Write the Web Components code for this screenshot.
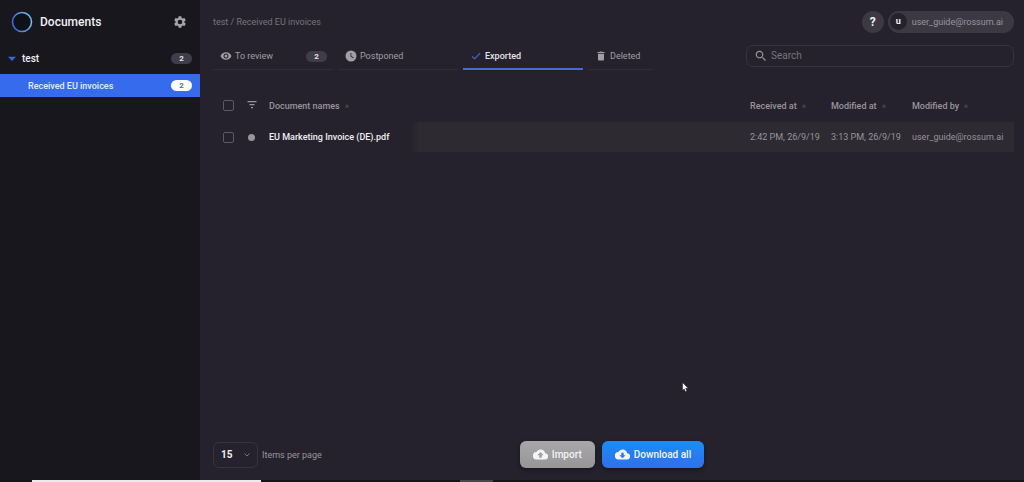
<!DOCTYPE html>
<html lang="en">
<head>
<meta charset="utf-8">
<meta name="viewport" content="width=device-width, initial-scale=1">
<title>Documents</title>
<style>
  body { margin: 0; background: #25222d; font: 9px/12px Roboto, "Liberation Sans", sans-serif; color: #98959c; }
</style>
</head>
<body>
<app-shell>
  <side-bar slot="side">
    <nav-queue label="test" count="2" kind="group"></nav-queue>
    <nav-queue label="Received EU invoices" count="2" kind="queue"></nav-queue>
  </side-bar>
  <top-bar user="user_guide@rossum.ai"></top-bar>
  <tool-row>
    <tab-link icon="eye" count="2">To review</tab-link>
    <tab-link icon="clock">Postponed</tab-link>
    <tab-link icon="check" active>Exported</tab-link>
    <tab-link icon="trash" compact>Deleted</tab-link>
    <search-box slot="end"></search-box>
  </tool-row>
  <document-table></document-table>
  <page-footer>
    <action-button icon="upload">Import</action-button>
    <action-button icon="download" primary>Download all</action-button>
  </page-footer>
</app-shell>
<mouse-pointer></mouse-pointer>
<task-strip></task-strip>

<script>
const define = (name, render) => customElements.define(name, class extends HTMLElement {
  connectedCallback() {
    if (this.shadowRoot) return;
    const t = document.createElement('template');
    t.innerHTML = `<style>*{box-sizing:border-box}:host{display:block}</style>` + render(this);
    this.attachShadow({ mode: 'open' }).append(t.content.cloneNode(true));
  }
});

const shapes = {
  gear: '<path fill-rule="evenodd" d="M19.4 13c.1-.3.1-.7.1-1s0-.7-.1-1l2.1-1.7c.2-.1.3-.4.1-.6l-2-3.500c-.1-.2-.4-.3-.6-.2l-2.500 1c-.5-.4-1.100-.7-1.700-1l-.4-2.600c0-.3-.2-.4-.5-.4h-4c-.2 0-.5.1-.5.4L9.100 5.100c-.6.200-1.200.6-1.700 1l-2.500-1c-.2-.1-.5 0-.6.2l-2 3.500c-.1.2-.1.5.1.6L4.500 11c0 .3-.1.7-.1 1s0 .7.1 1l-2.100 1.700c-.2.100-.2.400-.1.600l2 3.500c.1.200.4.300.6.200l2.500-1c.5.400 1.100.700 1.700 1l.4 2.600c0 .300.200.400.5.400h4c.2 0 .5-.1.5-.4l.4-2.600c.6-.2 1.200-.6 1.700-1l2.500 1c.2.100.5 0 .6-.2l2-3.500c.1-.2.1-.5-.1-.6zM12 16a4 4 0 1 1 0-8 4 4 0 0 1 0 8z"/>',
  eye: '<path fill-rule="evenodd" d="M12 4.500C7 4.500 2.700 7.600 1 12c1.700 4.400 6 7.500 11 7.500s9.300-3.100 11-7.500c-1.700-4.400-6-7.500-11-7.500zM12 17a5 5 0 1 1 0-10 5 5 0 0 1 0 10zm0-8a3 3 0 1 0 0 6 3 3 0 0 0 0-6z"/>',
  clock: '<path fill-rule="evenodd" d="M12 1a11 11 0 1 0 0 22 11 11 0 0 0 0-22zm4.500 15.500L11 13V6h1.700v6l4.700 3z"/>',
  check: '<path d="M9 16.200 4.800 12l-1.400 1.400L9 19 21 7l-1.400-1.400z"/>',
  trash: '<path d="M6 8h12v11a2 2 0 0 1-2 2H8a2 2 0 0 1-2-2zM5 4h4l1-1h4l1 1h4v2.500H5z"/>',
  search: '<path fill-rule="evenodd" d="M15.500 14h-.8l-.3-.3A6.500 6.500 0 1 0 13.700 14.400l.3.300v.8l5 5 1.500-1.500zm-6 0a4.500 4.500 0 1 1 0-9 4.500 4.500 0 0 1 0 9z"/>',
  filter: '<path d="M3 2h18v2.500H3zM7 8h10v2.500H7zM10 14h4v2.500h-4z"/>',
  sort: '<path d="M12 3l9 15H3z"/>',
  caret: '<path d="M0 5h24L12 18z"/>',
  upload: '<path fill-rule="evenodd" d="M19.400 10A7.500 7.500 0 0 0 5.400 8 6 6 0 0 0 6 20h13a5 5 0 0 0 .4-10zM14 13v4h-4v-4H7l5-5 5 5z"/>',
  download: '<path fill-rule="evenodd" d="M19.400 10A7.500 7.500 0 0 0 5.400 8 6 6 0 0 0 6 20h13a5 5 0 0 0 .4-10zM17 13l-5 5-5-5h3V9h4v4z"/>'
};
define('ui-icon', el => `<style>
  :host{flex:none;width:var(--size,12px);height:var(--size,12px)}
  svg{display:block;width:100%;height:100%;fill:currentColor}</style>
  <svg viewBox="0 0 24 24" aria-hidden="true">${shapes[el.getAttribute('name')]}</svg>`);

define('count-badge', () => `<style>
  :host{flex:none;width:21px;height:11px;border-radius:6px;background:var(--badge,#3f3d47);color:var(--badge-ink,#e6e5e8);font-size:8px;line-height:11px;font-weight:700;text-align:center}
  </style><slot></slot>`);

define('app-shell', () => `<style>
  :host{display:flex;min-height:calc(100vh - 2px)}
  aside{flex:none;width:200px;background:#18171e}
  main{flex:1;min-width:0;display:flex;flex-direction:column;padding:0 10px 12px 13px}
  </style><aside><slot name="side"></slot></aside><main><slot></slot></main>`);

define('side-bar', () => `<style>
  header{display:flex;align-items:center;gap:7px;height:43px;padding:0 13px 0 11px}
  h1{flex:1;margin:0;font-size:12px;line-height:16px;font-weight:500;color:#f1f0f3}
  .logo{width:22px;height:22px}
  button{border:0;padding:0;background:none;color:#a5a4a9;--size:14px}
  </style>
  <header>
    <svg class="logo" viewBox="0 0 22 22" aria-hidden="true"><defs><linearGradient id="g" x1="0" y1=".6" x2="1" y2=".3"><stop stop-color="#3b67dc"/><stop offset="1" stop-color="#73c4ee"/></linearGradient></defs><circle cx="11" cy="11" r="9.500" fill="#101018" stroke="url(#g)" stroke-width="1.600"/></svg>
    <h1>Documents</h1>
    <button type="button" aria-label="Settings"><ui-icon name="gear"></ui-icon></button>
  </header>
  <nav><slot></slot></nav>`);

define('nav-queue', el => {
  const group = el.getAttribute('kind') === 'group';
  return `<style>
  a{display:flex;align-items:center;gap:6px;text-decoration:none;padding-right:8px}
  span{flex:1}
  .group{height:31px;padding-left:8px;color:#f1f0f3;font-weight:500;font-size:10px}
  .queue{height:23px;padding-left:28px;background:#366bee;color:#e8edfc;font-size:9px;font-weight:500;--badge:#fff;--badge-ink:#5a6b95}
  ui-icon{color:#3b66d6;--size:8px}
  </style><a href="#" class="${group ? 'group' : 'queue'}">${group ? '<ui-icon name="caret"></ui-icon>' : ''}<span>${el.getAttribute('label')}</span><count-badge>${el.getAttribute('count')}</count-badge></a>`;
});

define('top-bar', el => `<style>
  :host{display:flex;align-items:center;gap:4px;height:43px}
  nav{flex:1;color:#77747c}
  nav a{color:inherit;text-decoration:none}
  button{border:0;padding:0;font:inherit;height:22px;border-radius:11px;background:#3c3944;color:#98959c}
  .help{width:22px;font-size:12px;font-weight:700;color:#f1f0f3}
  .user{display:flex;align-items:center;gap:5px;padding:0 11px 0 2px}
  .user b{width:17px;height:17px;border-radius:50%;background:#25222d;color:#f1f0f3;line-height:17px}
  </style>
  <nav aria-label="Breadcrumb"><a href="#">test</a> / <a href="#">Received EU invoices</a></nav>
  <button class="help" type="button">?</button>
  <button class="user" type="button"><b>u</b><span>${el.getAttribute('user')}</span></button>`);

define('tool-row', () => `<style>
  :host{display:flex;align-items:flex-start;justify-content:space-between}
  nav{display:flex;gap:5px}
  </style><nav><slot></slot></nav><slot name="end"></slot>`);

define('tab-link', el => `<style>
  :host{width:${el.hasAttribute('compact') ? 65 : 120}px}
  a{display:flex;align-items:center;gap:3px;height:27px;padding:0 6px 0 7px;color:#a19ea5;text-decoration:none;border-bottom:1px solid #302d37}
  a.on{color:#e6e5e8;font-weight:500;border-bottom:2px solid #466cd0}
  span{flex:1}
  .on ui-icon{color:#466cd0}
  </style><a href="#" class="${el.hasAttribute('active') ? 'on' : ''}"><ui-icon name="${el.getAttribute('icon')}"></ui-icon><span><slot></slot></span>${el.hasAttribute('count') ? `<count-badge>${el.getAttribute('count')}</count-badge>` : ''}</a>`);

define('search-box', () => `<style>
  :host{flex:0 1 268px;margin-top:2px}
  label{display:flex;align-items:center;gap:3px;height:22px;padding:0 7px;border:1px solid #37343e;border-radius:7px;color:#98959c;--size:14px}
  input{flex:1;min-width:0;border:0;outline:0;padding:0;background:none;font:inherit;font-size:10px;color:#e6e5e8}
  input::placeholder{color:#77747c;opacity:1}
  </style><label><ui-icon name="search"></ui-icon><input type="search" placeholder="Search" aria-label="Search"></label>`);

define('document-table', () => `<style>
  :host{flex:1;padding-top:19px}
  table{width:100%;border-collapse:collapse;table-layout:fixed}
  th,td{padding:0;text-align:left;white-space:nowrap}
  th{height:33px;font-weight:500}
  td{height:30px}
  tbody tr{background:linear-gradient(90deg,transparent 198px,#2d2a31 206px)}
  .pick{width:33px;padding-left:10px}
  .state{width:23px}
  .time{width:81px}
  .by{width:102px}
  .name{color:#f1f0f3;font-weight:500}
  input{appearance:none;display:block;width:11px;height:11px;margin:0;border:1px solid #5b5862;border-radius:2px}
  button{display:flex;align-items:center;gap:4px;padding:0;border:0;background:none;color:inherit;font:inherit}
  .sort ui-icon{color:#45424b;--size:6px}
  i{display:block;width:7px;height:7px;margin-left:2px;border-radius:50%;background:#98959c}
  </style>
  <table>
    <thead><tr>
      <th class="pick"><input type="checkbox" aria-label="Select all documents"></th>
      <th class="state"><button type="button" aria-label="Filter"><ui-icon name="filter"></ui-icon></button></th>
      <th><button class="sort" type="button">Document names<ui-icon name="sort"></ui-icon></button></th>
      <th class="time"><button class="sort" type="button">Received at<ui-icon name="sort"></ui-icon></button></th>
      <th class="time"><button class="sort" type="button">Modified at<ui-icon name="sort"></ui-icon></button></th>
      <th class="by"><button class="sort" type="button">Modified by<ui-icon name="sort"></ui-icon></button></th>
    </tr></thead>
    <tbody><tr>
      <td class="pick"><input type="checkbox" aria-label="Select EU Marketing Invoice (DE).pdf"></td>
      <td><i></i></td>
      <td class="name">EU Marketing Invoice (DE).pdf</td>
      <td>2:42 PM, 26/9/19</td>
      <td>3:13 PM, 26/9/19</td>
      <td>user_guide@rossum.ai</td>
    </tr></tbody>
  </table>`);

define('page-footer', () => `<style>
  :host{display:grid;grid-template-columns:1fr auto 1fr;align-items:center;padding-right:3px}
  label{display:flex;align-items:center;gap:4px}
  .pick{display:grid;align-items:center;width:45px;height:26px;border:1px solid #37343e;border-radius:6px}
  select{grid-area:1/1;appearance:none;width:100%;height:100%;padding:0 7px;border:0;background:none;font:inherit;font-size:10px;font-weight:700;color:#f1f0f3}
  svg{grid-area:1/1;justify-self:end;width:6px;height:4px;margin-right:7px;fill:none;stroke:#77747c;pointer-events:none}
  div{display:flex;gap:7px}
  </style>
  <label><span class="pick"><select aria-label="Items per page"><option>15</option><option>30</option><option>50</option></select><svg viewBox="0 0 6 4" aria-hidden="true"><path d="M.5.500 3 3 5.500.500"/></svg></span>Items per page</label>
  <div><slot></slot></div>`);

define('action-button', el => `<style>
  button{display:flex;align-items:center;justify-content:center;gap:4px;height:27px;padding:0 13px;border:0;border-radius:6px;background:linear-gradient(#a8a7a9,#969598);color:#f4f4f5;font:inherit;font-size:10px;font-weight:500;box-shadow:0 2px 4px #17151c;--size:15px}
  .primary{background:linear-gradient(#1b8cf4,#3070eb)}
  </style><button type="button" class="${el.hasAttribute('primary') ? 'primary' : ''}"><ui-icon name="${el.getAttribute('icon')}"></ui-icon><slot></slot></button>`);

define('mouse-pointer', () => `<style>
  :host{position:absolute;left:682px;top:382px;width:7px;height:11px;pointer-events:none}
  svg{display:block}
  </style><svg width="7" height="11" viewBox="0 0 7 11" aria-hidden="true"><path d="M.5.500v8l1.700-1.600 1.200 2.900 1.500-.7L3.700 6.300h2.500z" fill="#fff" stroke="#17151c" stroke-width=".5"/></svg>`);

define('task-strip', () => `<style>
  :host{display:flex;height:2px;padding-left:32px;background:#17141b}
  .open{width:229px;background:#eceaf0}
  .idle{width:33px;margin-left:199px;background:#48454c}
  </style><span class="open"></span><span class="idle"></span>`);
</script>
</body>
</html>
